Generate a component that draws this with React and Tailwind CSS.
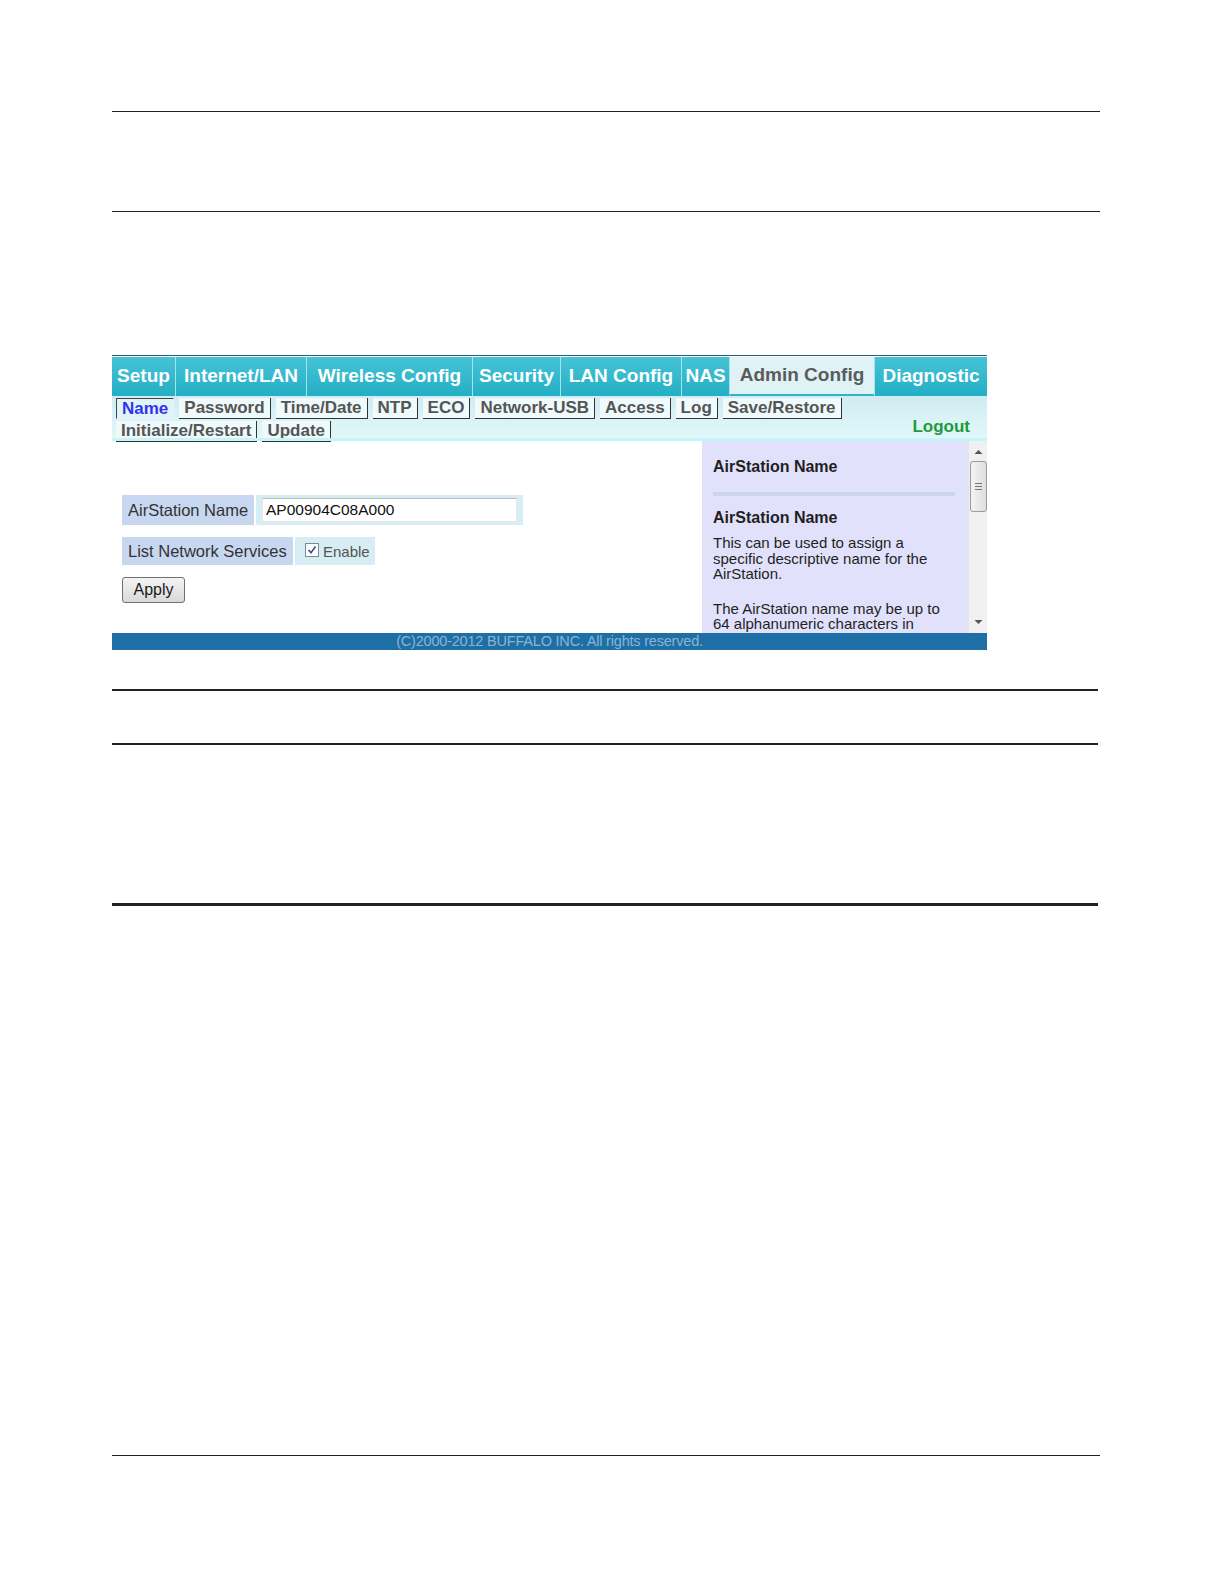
// App.jsx

import React from "react";

const mainTabs = [
    { label: "Setup", w: "w-[63px]" },
    { label: "Internet/LAN", w: "w-[131px]" },
    { label: "Wireless Config", w: "w-[166px]" },
    { label: "Security", w: "w-[88px]" },
    { label: "LAN Config", w: "w-[121px]" },
    { label: "NAS", w: "w-[48px]" },
    { label: "Admin Config", w: "w-[145px]", active: true },
    { label: "Diagnostic", w: "w-[113px]" },
];

const subRow1 = ["Name", "Password", "Time/Date", "NTP", "ECO", "Network-USB", "Access", "Log", "Save/Restore"];
const subRow2 = ["Initialize/Restart", "Update"];

const SubTab = ({ label, active }) => {
    return (
        <span
            className={
                active
                    ? "h-[21px] px-[5px] leading-[20px] border-l border-t border-[#444] border-r border-b border-r-[#eef] border-b-[#eef] bg-[#def4f7] text-[#3232ee]"
                    : "h-[21px] px-[5px] leading-[20px] border-r border-b border-[#333] bg-[#eefafb] text-[#555]"
            }
        >
            {label}
        </span>
    );
};

const Line = ({ className }) => <div className={"ml-[112px] bg-[#222] " + className} />;

const App = () => {
    return (
        <div className="w-[1224px] h-[1584px] bg-white pt-[111px] font-['Liberation_Sans',Arial,sans-serif]">
            <Line className="h-px w-[988px]" />
            <div className="h-[99px]" />
            <Line className="h-px w-[988px]" />
            <div className="h-[143px]" />

            {/* router admin screenshot */}
            <section className="ml-[112px] w-[875px] h-[295px] flex flex-col overflow-hidden border-t border-[#2c5c7c]">
                <nav className="flex h-[40px] pt-px bg-white">
                    {mainTabs.map((t, i) => (
                        <div
                            key={t.label}
                            className={
                                (t.active
                                    ? "bg-[#dff2f5] text-[#5b5b5b] border-b-2 border-[#2eb4c9] "
                                    : "bg-linear-to-b from-[#45c3d6] to-[#22afc5] text-white ") +
                                (i > 0 ? "border-l border-l-[#a8e2ea] " : "") +
                                t.w +
                                " h-full flex items-center justify-center text-[19px] font-bold whitespace-nowrap"
                            }
                        >
                            {t.label}
                        </div>
                    ))}
                </nav>

                <div className="relative h-[45px] bg-linear-to-b from-[#cfecf1] to-[#e3f9fb] pl-[4px] pt-[2px] text-[17px] font-bold">
                    <div className="flex gap-[5px]">
                        {subRow1.map((s, i) => (
                            <SubTab key={s} label={s} active={i === 0} />
                        ))}
                    </div>
                    <div className="flex gap-[5px] mt-[2px]">
                        {subRow2.map((s) => (
                            <SubTab key={s} label={s} />
                        ))}
                    </div>
                    <span className="absolute right-[17px] top-[18px] text-[#1c9a3c] text-[17px] font-bold">Logout</span>
                    <div className="absolute left-0 right-0 bottom-0 h-[3px] bg-[#c6f5f8]" />
                </div>

                <div className="flex h-[192px]">
                    {/* form */}
                    <div className="w-[590px] bg-white pl-[10px] pt-[54px] text-[16.5px] text-[#333]">
                        <div className="flex gap-[2px] h-[30px]">
                            <div className="w-[132px] bg-[#c8d7f0] flex items-center pl-[6px]">AirStation Name</div>
                            <div className="w-[267px] bg-[#d6edf3] flex items-center pl-[6px]">
                                <div className="w-[255px] h-[24px] bg-white border border-[#e6e6e6] border-t-[#bcbcbc] flex items-center pl-[3px] text-[15.5px] text-[#111]">
                                    AP00904C08A000
                                </div>
                            </div>
                        </div>
                        <div className="flex gap-[2px] h-[28px] mt-[12px]">
                            <div className="w-[171px] bg-[#c8d7f0] flex items-center pl-[6px]">List Network Services</div>
                            <div className="w-[80px] bg-[#d6edf3] flex items-center pl-[10px] gap-[4px]">
                                <span className="w-[14px] h-[14px] bg-white border border-[#7a8a9a] flex items-center justify-center -mt-[2px]">
                                    <svg width="10" height="10" viewBox="0 0 10 10">
                                        <path d="M1.5 5 L4 7.8 L8.5 1.5" fill="none" stroke="#3c4a9c" strokeWidth="1.6" />
                                    </svg>
                                </span>
                                <span className="text-[15px] text-[#555] mt-[3px]">Enable</span>
                            </div>
                        </div>
                        <button className="mt-[12px] w-[63px] h-[26px] rounded-[3px] border border-[#707070] bg-linear-to-b from-[#f4f4f4] to-[#d9d9d9] text-[16px] text-[#1a1a1a]">
                            Apply
                        </button>
                    </div>

                    {/* help panel */}
                    <div className="w-[266px] bg-[#e1e1fb] overflow-hidden pl-[11px] pr-[10px] text-[#1f1f1f]">
                        <h3 className="mt-[17px] text-[16px] font-bold leading-[18px]">AirStation Name</h3>
                        <div className="mt-[16px] h-[4px] w-[242px] bg-[#ccd4ee]" />
                        <h3 className="mt-[13px] text-[16px] font-bold leading-[18px]">AirStation Name</h3>
                        <p className="mt-[8px] text-[15px] leading-[15.5px]">
                            This can be used to assign a specific descriptive name for the AirStation.
                        </p>
                        <p className="mt-[19px] text-[15px] leading-[15.5px]">
                            The AirStation name may be up to 64 alphanumeric characters in length, and '-' are allowed, but a '-' cannot be used as the first or last character.
                        </p>
                    </div>

                    {/* scrollbar */}
                    <div className="w-[19px] bg-[#f0f0f0] flex flex-col items-center border-l border-[#e4e4e4]">
                        <svg width="9" height="6" viewBox="0 0 9 6" className="mt-[8px]">
                            <path d="M0.5 5 L4.5 1 L8.5 5 Z" fill="#555" />
                        </svg>
                        <div className="mt-[6px] w-[17px] h-[51px] rounded-[3px] border border-[#9a9a9a] bg-linear-to-r from-[#f4f4f4] to-[#dedede] flex flex-col items-center justify-center gap-[2px]">
                            <span className="w-[7px] h-px bg-[#777]" />
                            <span className="w-[7px] h-px bg-[#777]" />
                            <span className="w-[7px] h-px bg-[#777]" />
                        </div>
                        <svg width="9" height="6" viewBox="0 0 9 6" className="mt-auto mb-[8px]">
                            <path d="M0.5 1 L4.5 5 L8.5 1 Z" fill="#555" />
                        </svg>
                    </div>
                </div>

                <footer className="h-[17px] bg-[#1e6fa6] flex justify-center items-center">
                    <span className="text-[14.5px] leading-[17px] text-[#8db3d3] tracking-[-0.2px]">
                        (C)2000-2012 BUFFALO INC. All rights reserved.
                    </span>
                </footer>
            </section>

            <div className="h-[39px]" />
            <Line className="h-[2px] w-[986px]" />
            <div className="h-[52px]" />
            <Line className="h-[2px] w-[986px]" />
            <div className="h-[158px]" />
            <Line className="h-[3px] w-[986px]" />
            <div className="h-[549px]" />
            <Line className="h-px w-[988px]" />
        </div>
    );
};

export default App;
